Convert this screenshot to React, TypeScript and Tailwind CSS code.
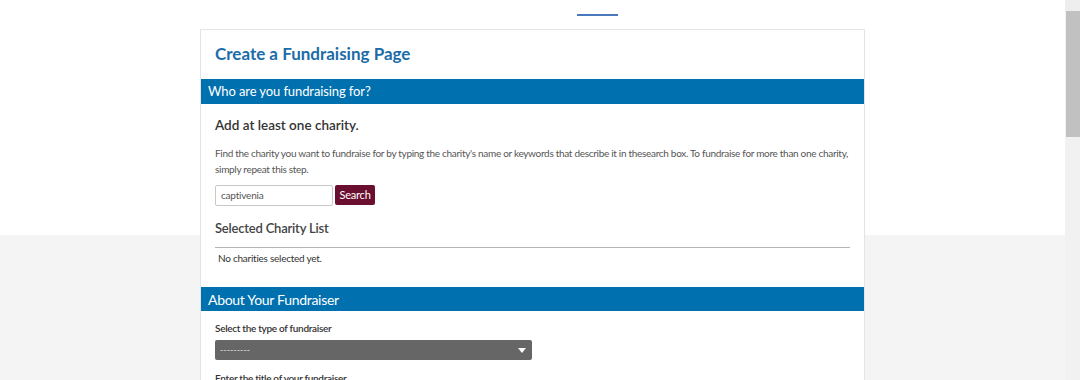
export default function App() {
  return (
    <div className="flex h-[380px] w-[1080px] overflow-hidden font-['Lato',sans-serif]">
      <main className="h-full w-[1065px] bg-[linear-gradient(to_bottom,#ffffff_235px,#f4f4f4_235px)]">
        {/* top tabs, mostly scrolled away */}
        <div className="flex h-[29px] pl-[577px]">
          <div className="mt-[14px] h-[2px] w-[41px] bg-[#4a78bd]" />
        </div>

        <section className="ml-[200px] w-[665px] border border-[#e4e4e4] bg-white">
          <h1 className="px-[14px] pb-[15px] pt-[14px] text-[17px] font-bold leading-[20px] text-[#1b6ca8]">
            Create a Fundraising Page
          </h1>

          <div className="flex h-[25px] items-center bg-[#0070ae] px-[7px] text-[13px] tracking-[-0.1px] text-white">
            Who are you fundraising for?
          </div>

          <div className="px-[14px]">
            <h2 className="mt-[13px] text-[13.5px] font-semibold leading-[16px] text-[#333]">
              Add at least one charity.
            </h2>
            <p className="mt-[12px] text-[10px] leading-[16px] tracking-[-0.3px] text-[#555]">
              Find the charity you want to fundraise for by typing the charity's name or keywords that describe it in thesearch box. To fundraise for more than one charity, simply repeat this step.
            </p>
            <div className="mt-[8px] flex items-start gap-[2px]">
              <div className="flex h-[21px] w-[118px] items-center rounded-[2px] border border-[#c8c8c8] px-[5px] text-[10px] tracking-[-0.2px] text-[#555]">
                captivenia
              </div>
              <button className="h-[20px] w-[40px] rounded-[2px] bg-[#6b0f30] text-[11px] tracking-[-0.2px] text-white">
                Search
              </button>
            </div>
            <h2 className="mt-[14px] text-[13px] font-semibold leading-[16px] tracking-[-0.2px] text-[#444]">
              Selected Charity List
            </h2>
            <div className="mt-[11px] h-px bg-[#b4b4b4]" />
            <p className="mt-[4px] pl-[3px] text-[10px] leading-[12px] tracking-[-0.25px] text-[#333]">
              No charities selected yet.
            </p>
          </div>

          <div className="mt-[23px] flex h-[24px] items-center bg-[#0070ae] px-[7px] text-[14px] tracking-[-0.3px] text-white">
            About Your Fundraiser
          </div>

          <div className="px-[14px]">
            <label className="mt-[11px] block text-[10px] font-semibold leading-[12px] tracking-[-0.3px] text-[#333]">
              Select the type of fundraiser
            </label>
            <div className="mt-[6px] flex h-[20px] w-[317px] items-center justify-between rounded-[2px] bg-[#666] px-[5px] text-[9px] text-[#ddd]">
              <span>---------</span>
              <svg width="8" height="5" viewBox="0 0 8 5" className="mr-[1px]">
                <path d="M0 0h8L4 5z" fill="#fff" />
              </svg>
            </div>
            <label className="mt-[12px] block text-[10px] font-semibold leading-[12px] tracking-[-0.3px] text-[#333]">
              Enter the title of your fundraiser
            </label>
          </div>
        </section>
      </main>

      {/* scrollbar */}
      <div className="flex h-full w-[15px] flex-col bg-[#f1f1f1]">
        <div className="h-[11px] bg-[#eeeeee]" />
        <div className="ml-[1px] h-[126px] bg-[#c1c1c1]" />
      </div>
    </div>
  );
}
